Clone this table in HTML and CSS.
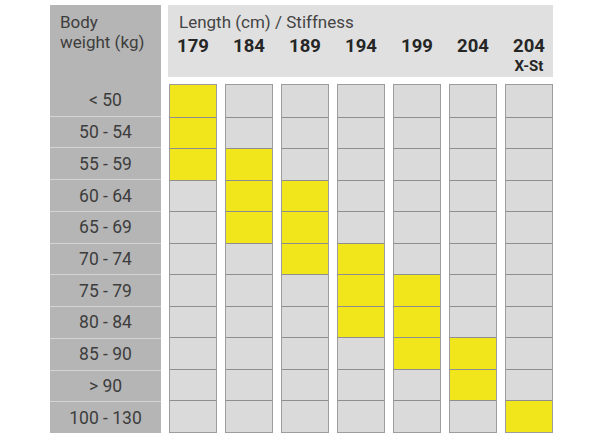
FILE: index.html
```html
<!DOCTYPE html>
<html>
<head>
<meta charset="utf-8">
<link rel="stylesheet" href="styles.css">
</head>
<body>
<div class="chart">
  <div class="weights">
    <div class="weights-head">Body<br>weight (kg)</div>
    <div class="weights-rows">
      <div class="wrow">&lt; 50</div>
      <div class="wrow">50 - 54</div>
      <div class="wrow">55 - 59</div>
      <div class="wrow">60 - 64</div>
      <div class="wrow">65 - 69</div>
      <div class="wrow">70 - 74</div>
      <div class="wrow">75 - 79</div>
      <div class="wrow">80 - 84</div>
      <div class="wrow">85 - 90</div>
      <div class="wrow">&gt; 90</div>
      <div class="wrow">100 - 130</div>
    </div>
  </div>
  <div class="main">
    <div class="head">
      <div class="head-title">Length (cm) / Stiffness</div>
      <div class="head-sizes">
        <div class="size">179</div>
        <div class="size">184</div>
        <div class="size">189</div>
        <div class="size">194</div>
        <div class="size">199</div>
        <div class="size">204</div>
        <div class="size">204<span class="sub">X-St</span></div>
      </div>
    </div>
    <div class="grid">
      <div class="col">
        <div class="cell on"></div><div class="cell on"></div><div class="cell on"></div><div class="cell"></div><div class="cell"></div><div class="cell"></div><div class="cell"></div><div class="cell"></div><div class="cell"></div><div class="cell"></div><div class="cell"></div>
      </div>
      <div class="col">
        <div class="cell"></div><div class="cell"></div><div class="cell on"></div><div class="cell on"></div><div class="cell on"></div><div class="cell"></div><div class="cell"></div><div class="cell"></div><div class="cell"></div><div class="cell"></div><div class="cell"></div>
      </div>
      <div class="col">
        <div class="cell"></div><div class="cell"></div><div class="cell"></div><div class="cell on"></div><div class="cell on"></div><div class="cell on"></div><div class="cell"></div><div class="cell"></div><div class="cell"></div><div class="cell"></div><div class="cell"></div>
      </div>
      <div class="col">
        <div class="cell"></div><div class="cell"></div><div class="cell"></div><div class="cell"></div><div class="cell"></div><div class="cell on"></div><div class="cell on"></div><div class="cell on"></div><div class="cell"></div><div class="cell"></div><div class="cell"></div>
      </div>
      <div class="col">
        <div class="cell"></div><div class="cell"></div><div class="cell"></div><div class="cell"></div><div class="cell"></div><div class="cell"></div><div class="cell on"></div><div class="cell on"></div><div class="cell on"></div><div class="cell"></div><div class="cell"></div>
      </div>
      <div class="col">
        <div class="cell"></div><div class="cell"></div><div class="cell"></div><div class="cell"></div><div class="cell"></div><div class="cell"></div><div class="cell"></div><div class="cell"></div><div class="cell on"></div><div class="cell on"></div><div class="cell"></div>
      </div>
      <div class="col">
        <div class="cell"></div><div class="cell"></div><div class="cell"></div><div class="cell"></div><div class="cell"></div><div class="cell"></div><div class="cell"></div><div class="cell"></div><div class="cell"></div><div class="cell"></div><div class="cell on"></div>
      </div>
    </div>
  </div>
</div>
</body>
</html>
```

FILE: styles.css
```css
html, body {
  margin: 0;
  padding: 0;
  background: #fff;
}
body {
  font-family: Roboto, "Liberation Sans", sans-serif;
  color: #3d3d3d;
}
.chart {
  display: flex;
  gap: 7px;
  padding: 5px 0 0 50px;
}
.weights {
  width: 111px;
  height: 428px;
  background: #b5b5b5;
  display: flex;
  flex-direction: column;
}
.weights-head {
  height: 79px;
  box-sizing: border-box;
  padding: 7px 0 0 10px;
  font-size: 17px;
  line-height: 20px;
}
.weights-rows {
  height: 349px;
  display: grid;
  grid-template-rows: repeat(11, 1fr);
}
.wrow {
  display: flex;
  align-items: center;
  justify-content: center;
  font-size: 17.5px;
  border-top: 1px solid #d4d4d4;
}
.wrow:first-child {
  border-top: none;
}
.main {
  width: 385px;
  display: flex;
  flex-direction: column;
  gap: 7px;
}
.head {
  height: 72px;
  box-sizing: border-box;
  background: #e0e0e0;
  padding: 7px 0 0 11px;
}
.head-title {
  font-size: 17px;
  line-height: 20px;
  color: #444;
}
.head-sizes {
  margin-top: 3px;
  margin-left: -10px;
  display: grid;
  grid-template-columns: repeat(7, 48px);
  column-gap: 8px;
}
.size {
  font-size: 18.5px;
  font-weight: 700;
  line-height: 22px;
  color: #262626;
  text-align: center;
  display: flex;
  flex-direction: column;
  align-items: center;
}
.sub {
  font-size: 15px;
  line-height: 18px;
}
.grid {
  height: 349px;
  display: grid;
  grid-template-columns: repeat(7, 48px);
  column-gap: 8px;
  justify-content: end;
}
.col {
  display: grid;
  grid-template-rows: repeat(11, 1fr);
  border: 1px solid #9c9c9c;
  background: #dadada;
}
.cell {
  border-top: 1px solid #8f8f8f;
}
.cell:first-child {
  border-top: none;
}
.cell.on {
  background: #f1e51b;
}
```
